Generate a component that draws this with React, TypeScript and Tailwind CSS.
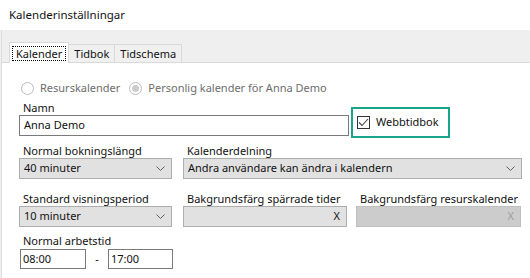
import React from 'react';

const FONT = "font-['Noto_Sans','Liberation_Sans',sans-serif]";

function Chevron() {
  return (
    <svg width="9" height="5" viewBox="0 0 9 5" className="shrink-0">
      <polyline points="0.5,0.5 4.5,4.5 8.5,0.5" fill="none" stroke="#606060" strokeWidth="1" />
    </svg>
  );
}

function Select({ value, className }: { value: string; className: string }) {
  return (
    <div
      className={`h-[21px] flex items-center justify-between pl-[4px] pr-[6px] bg-[#e1e1e1] border border-[#adadad] ${className}`}
    >
      <span>{value}</span>
      <Chevron />
    </div>
  );
}

function Label({ children }: { children: React.ReactNode }) {
  return <div className="h-[15px] leading-[15px] pl-[4px] whitespace-nowrap">{children}</div>;
}

function Tab({ label, active }: { label: string; active?: boolean }) {
  if (active) {
    return (
      <div className="h-[21px] px-[2px] pt-[3px] bg-white border border-b-0 border-[#d9d9d9] -mb-px relative z-10">
        <div className="h-[15px] leading-[14px] px-[3px] border border-dotted border-black">{label}</div>
      </div>
    );
  }
  return (
    <div className="h-[18px] leading-[17px] px-[5px] bg-[#f0f0f0] border border-[#d9d9d9] border-l-0 border-b-0">
      {label}
    </div>
  );
}

function Radio({ checked }: { checked?: boolean }) {
  return (
    <span className="w-[13px] h-[13px] rounded-full border border-[#bcbcbc] bg-white flex items-center justify-center shrink-0">
      {checked && <span className="w-[7px] h-[7px] rounded-full bg-[#cccccc]" />}
    </span>
  );
}

export default function App() {
  return (
    <div className={`w-[530px] h-[278px] overflow-hidden bg-white text-[11px] text-[#111] ${FONT}`}>
      {/* Title bar */}
      <div className="h-[30px] flex items-center pl-[9px] text-[11.5px]">Kalenderinställningar</div>

      <div className="flex">
        {/* window frame edge */}
        <div className="w-[2px] bg-[#f0f0f0] border-r border-[#dcdcdc] shrink-0" />
        <div className="flex-1">
          {/* Tab strip */}
          <div className="h-[33px] bg-[#efefef] border-b border-[#d9d9d9] flex items-end pl-[7px]">
            <Tab label="Kalender" active />
            <Tab label="Tidbok" />
            <Tab label="Tidschema" />
          </div>

          {/* Panel */}
          <div className="pl-[17px] pt-[17px] pb-[10px]">
            <div className="flex items-center h-[16px] pl-[2px] text-[#6d6d6d]">
              <Radio />
              <span className="ml-[6px]">Resurskalender</span>
              <span className="ml-[9px]">
                <Radio checked />
              </span>
              <span className="ml-[6px]">Personlig kalender för Anna Demo</span>
            </div>

            <div className="flex mt-[4px]">
              <div className="w-[330px]">
                <Label>Namn</Label>
                <div className="h-[21px] flex items-center pl-[4px] border border-[#7a7a7a]">Anna Demo</div>
              </div>
              <div className="ml-[2px] mt-[7px] w-[99px] h-[31px] border-2 border-[#19a58a] flex items-center pl-[4px]">
                <span className="w-[13px] h-[13px] border border-[#333333] bg-white flex items-center justify-center">
                  <svg width="11" height="9" viewBox="0 0 11 9">
                    <polyline points="1,4.5 4,7.5 10,1" fill="none" stroke="#444444" strokeWidth="1.1" />
                  </svg>
                </span>
                <span className="ml-[6px]">Webbtidbok</span>
              </div>
            </div>

            <div className="flex gap-[11px] mt-[5px]">
              <div className="w-[153px]">
                <Label>Normal bokningslängd</Label>
                <Select value="40 minuter" className="w-[153px]" />
              </div>
              <div className="w-[339px]">
                <Label>Kalenderdelning</Label>
                <Select value="Andra användare kan ändra i kalendern" className="w-[339px]" />
              </div>
            </div>

            <div className="flex mt-[12px]">
              <div className="w-[153px]">
                <Label>Standard visningsperiod</Label>
                <Select value="10 minuter" className="w-[153px]" />
              </div>
              <div className="w-[164px] ml-[11px]">
                <Label>Bakgrundsfärg spärrade tider</Label>
                <div className="h-[21px] flex items-center justify-end pr-[6px] bg-[#e1e1e1] border border-[#adadad]">X</div>
              </div>
              <div className="w-[165px] ml-[9px]">
                <Label>Bakgrundsfärg resurskalender</Label>
                <div className="h-[21px] flex items-center justify-end pr-[6px] bg-[#cccccc] border border-[#bfbfbf] text-[#a0a0a0]">
                  X
                </div>
              </div>
            </div>

            <div className="mt-[6px]">
              <Label>Normal arbetstid</Label>
              <div className="flex items-center mt-[1px] ml-[1px]">
                <div className="w-[66px] h-[20px] flex items-center pl-[2px] border border-[#7a7a7a]">08:00</div>
                <span className="w-[22px] text-center">-</span>
                <div className="w-[65px] h-[20px] flex items-center pl-[2px] border border-[#7a7a7a]">17:00</div>
              </div>
            </div>
          </div>
        </div>
      </div>
    </div>
  );
}
